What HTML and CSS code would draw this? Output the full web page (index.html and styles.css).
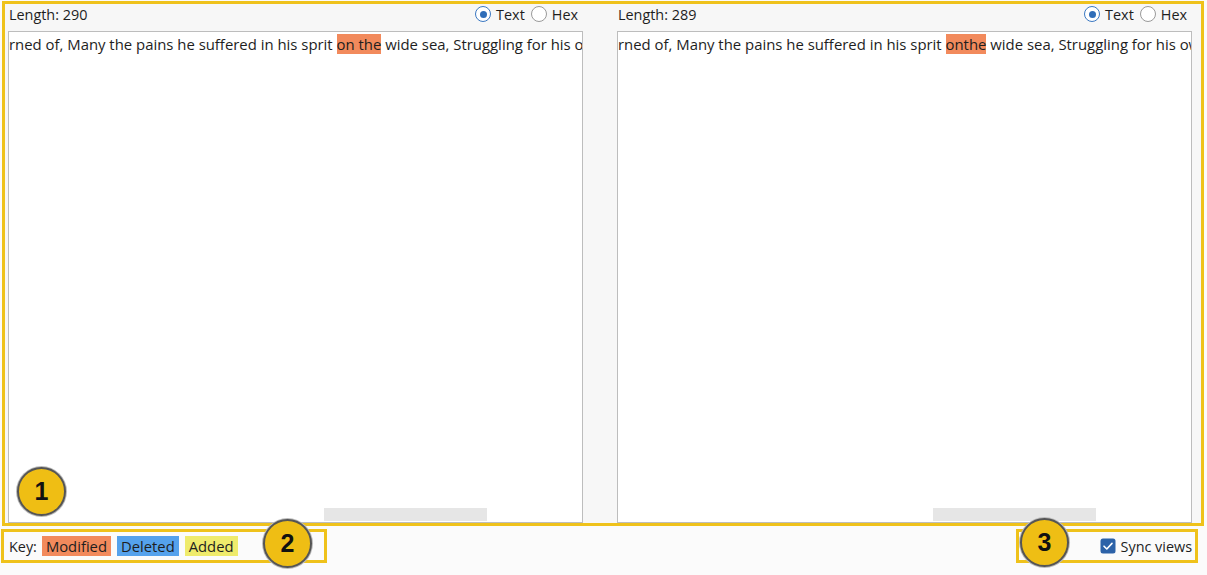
FILE: index.html
```html
<!DOCTYPE html>
<html>
<head>
<meta charset="utf-8">
<link rel="stylesheet" href="styles.css">
</head>
<body>
<div class="page">
  <div class="main">
    <div class="panel">
      <div class="head">
        <span class="len">Length: 290</span>
        <div class="radios">
          <span class="radio on"></span><span class="rl">Text</span>
          <span class="radio"></span><span class="rl">Hex</span>
        </div>
      </div>
      <div class="box">
        <div class="line">rned of, Many the pains he suffered in his sprit <span class="mod">on the</span> wide sea, Struggling for his o</div>
        <div class="scroll"><div class="thumb t1"></div></div>
      </div>
    </div>
    <div class="panel">
      <div class="head">
        <span class="len">Length: 289</span>
        <div class="radios">
          <span class="radio on"></span><span class="rl">Text</span>
          <span class="radio"></span><span class="rl">Hex</span>
        </div>
      </div>
      <div class="box">
        <div class="line">rned of, Many the pains he suffered in his sprit <span class="mod">onthe</span> wide sea, Struggling for his ow</div>
        <div class="scroll"><div class="thumb t2"></div></div>
      </div>
    </div>
  </div>
  <div class="bottom">
    <div class="keybox">
      <span class="key">Key:</span>
      <span class="tag modified">Modified</span>
      <span class="tag deleted">Deleted</span>
      <span class="tag added">Added</span>
    </div>
    <div class="syncbox">
      <span class="check"><svg width="16" height="16" viewBox="0 0 16 16"><rect x="0.5" y="0.5" width="15" height="15" rx="2.5" fill="#2c62a8"/><path d="M4 8.2 L6.8 11 L12 5.4" fill="none" stroke="#fff" stroke-width="1.6" stroke-linecap="round" stroke-linejoin="round"/></svg></span>
      <span class="sync">Sync views</span>
    </div>
  </div>
  <div class="badge b1">1</div>
  <div class="badge b2">2</div>
  <div class="badge b3">3</div>
</div>
</body>
</html>
```
FILE: styles.css
```css
html, body {
  margin: 0;
  padding: 0;
}
body {
  background: #fbfbfb;
  font-family: "Open Sans", "Noto Sans", sans-serif;
  font-size: 14.4px;
  color: #1e1e1e;
  width: 1207px;
  height: 575px;
  overflow: hidden;
}
.page {
  position: relative;
  width: 1207px;
  height: 575px;
}
.main {
  margin: 1px 0 0 2px;
  width: 1190px;
  border: 3px solid #efc21b;
  background: #f7f7f7;
  display: flex;
  gap: 34px;
  padding: 0 3px;
}
.panel {
  width: 575px;
  display: flex;
  flex-direction: column;
}
.head {
  height: 27px;
  display: flex;
  align-items: center;
  justify-content: space-between;
  padding-bottom: 7px;
  box-sizing: border-box;
}
.len {
  padding-left: 1px;
}
.radios {
  display: flex;
  align-items: center;
  padding-right: 5px;
}
.radio {
  width: 16px;
  height: 16px;
  box-sizing: border-box;
  border: 1px solid #9a9a9a;
  border-radius: 50%;
  background: #fff;
  position: relative;
  margin-right: 5px;
}
.radio.on {
  border-color: #3b78c2;
}
.radio.on::after {
  content: "";
  position: absolute;
  left: 3.5px;
  top: 3.5px;
  width: 7px;
  height: 7px;
  border-radius: 50%;
  background: #2f6db8;
}
.rl {
  margin-right: 6px;
}
.rl:last-child {
  margin-right: 0;
}
.box {
  height: 492px;
  box-sizing: border-box;
  border: 1px solid #bdbdbd;
  background: #fff;
  overflow: hidden;
  position: relative;
}
.line {
  white-space: nowrap;
  overflow: hidden;
  padding-top: 3px;
  line-height: 19px;
  font-size: 14.9px;
}
.mod {
  background: #f28a5c;
}
.scroll {
  position: absolute;
  left: 0;
  right: 0;
  bottom: 0;
  height: 14px;
}
.thumb {
  position: absolute;
  top: 0;
  height: 13px;
  width: 163px;
  background: #e6e6e6;
}
.t1 { left: 315px; }
.t2 { left: 315px; }
.bottom {
  display: flex;
  justify-content: space-between;
  margin-top: 3px;
  padding: 0 9px 0 1px;
}
.keybox {
  width: 326px;
  height: 34px;
  box-sizing: border-box;
  border: 3px solid #efc21b;
  display: flex;
  align-items: center;
  padding-left: 5px;
}
.key {
  margin-right: 5px;
}
.tag {
  height: 20px;
  line-height: 20px;
  padding: 0 4px;
  margin-right: 6px;
  font-size: 14.8px;
}
.modified { background: #f28a5c; }
.deleted { background: #55a2ec; }
.added { background: #efeb6c; }
.syncbox {
  width: 182px;
  height: 34px;
  box-sizing: border-box;
  border: 3px solid #efc21b;
  display: flex;
  align-items: center;
  justify-content: flex-end;
  padding-right: 3px;
}
.check {
  display: flex;
  margin-right: 5px;
}
.badge {
  position: absolute;
  width: 49px;
  height: 49px;
  box-sizing: border-box;
  border-radius: 50%;
  background: #efbe14;
  border: 2px solid #555;
  box-shadow: 0 0 0 1px #bbb;
  display: flex;
  align-items: center;
  justify-content: center;
  font-family: "Liberation Sans", Arial, sans-serif;
  font-weight: bold;
  font-size: 25px;
  color: #111;
}
.b1 { left: 17px; top: 466px; }
.b2 { left: 263px; top: 518px; }
.b3 { left: 1020px; top: 517px; }
```
